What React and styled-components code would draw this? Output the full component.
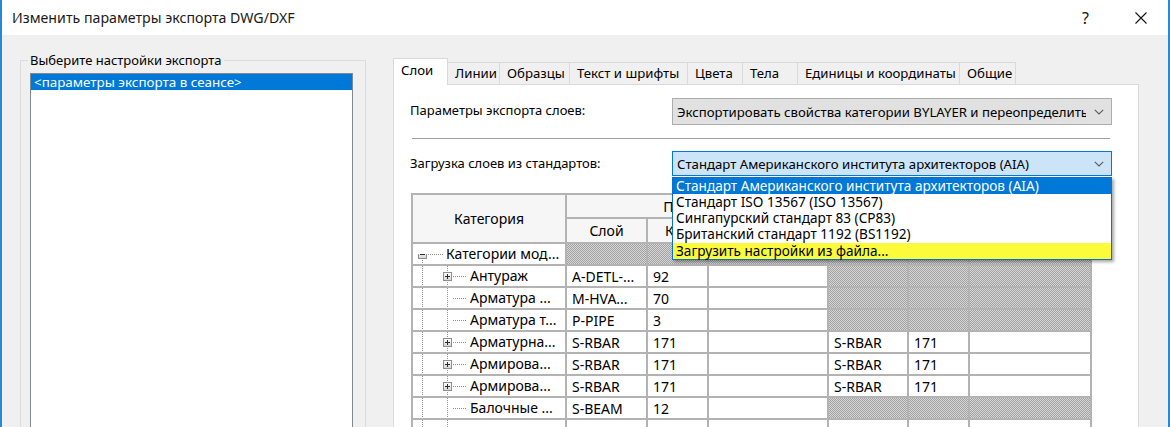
import React from 'react';
import styled, { createGlobalStyle, css } from 'styled-components';

const FONT = `"Noto Sans", "Open Sans", "DejaVu Sans", sans-serif`;

const Global = createGlobalStyle`
  html, body { margin: 0; padding: 0; background: #fff; }
  #root { width: 1170px; height: 427px; overflow: hidden; }
  * { box-sizing: border-box; }
`;

const Window = styled.div`
  width: 1170px;
  height: 427px;
  border-left: 2px solid #2a86d6;
  border-right: 2px solid #2a86d6;
  display: flex;
  flex-direction: column;
  font-family: ${FONT};
  color: #000;
  overflow: hidden;
`;

const TitleBar = styled.div`
  height: 35px;
  flex: none;
  background: #fff;
  display: flex;
  align-items: center;
  padding-left: 10px;
`;

const Title = styled.div`
  flex: 1;
  font-size: 14.2px;
  color: #1a1a1a;
`;

const TitleButton = styled.div`
  width: 55px;
  height: 35px;
  display: flex;
  align-items: center;
  justify-content: center;
  font-size: 16px;
  color: #111;
`;

const Body = styled.div`
  flex: 1;
  min-height: 0;
  background: #f0f0f0;
  display: flex;
  align-items: flex-start;
  padding: 16px 0 0 18px;
`;

const GroupBox = styled.fieldset`
  margin: 0;
  width: 346px;
  height: 420px;
  border: 1px solid #dcdcdc;
  padding: 4px 12px 0 9px;
  flex: none;
`;

const Legend = styled.legend`
  padding: 0 2px;
  margin-left: -2px;
  font-size: 13px;
  line-height: 18px;
  color: #000;
`;

const ListBox = styled.div`
  width: 323px;
  height: 400px;
  background: #fff;
  border: 1px solid #828790;
`;

const ListItem = styled.div`
  height: 16px;
  line-height: 16px;
  font-size: 13.4px;
  padding-left: 3px;
  white-space: nowrap;
  ${(p) => p.$selected && css`
    background: #0078d7;
    color: #fff;
  `}
`;

const TabArea = styled.div`
  margin: 7px 0 0 27px;
  width: 746px;
  height: 420px;
  display: flex;
  flex-direction: column;
  flex: none;
`;

const TabStrip = styled.div`
  display: flex;
  align-items: flex-end;
  height: 26px;
  flex: none;
  position: relative;
  z-index: 1;
`;

const Tab = styled.div`
  width: ${(p) => p.$w}px;
  height: 22px;
  margin-right: -1px;
  border: 1px solid #d9d9d9;
  border-bottom: none;
  background: #f0f0f0;
  padding-left: 7px;
  font-size: 13.2px;
  line-height: 21px;
  white-space: nowrap;
  ${(p) => p.$active && css`
    height: 27px;
    margin-bottom: -1px;
    background: #fff;
    line-height: 22px;
    position: relative;
    z-index: 2;
  `}
`;

const Panel = styled.div`
  flex: 1;
  background: #fff;
  border: 1px solid #d9d9d9;
  padding: 13px 0 0 16px;
  display: flex;
  flex-direction: column;
`;

const FieldRow = styled.div`
  display: grid;
  grid-template-columns: 262px 440px;
  align-items: center;
  margin-top: ${(p) => p.$mt || 0}px;
`;

const Label = styled.div`
  font-size: 13px;
  line-height: 18px;
  margin-top: ${(p) => p.$dy || 0}px;
`;

const ComboWrap = styled.div`
  position: relative;
`;

const Combo = styled.div`
  height: ${(p) => p.$h}px;
  display: flex;
  align-items: center;
  padding: 0 7px 0 4px;
  font-size: 13.2px;
  border: 1px solid ${(p) => (p.$focused ? '#0078d7' : '#adadad')};
  background: ${(p) => (p.$focused ? '#cce4f7' : '#e1e1e1')};
`;

const ComboText = styled.div`
  flex: 1;
  overflow: hidden;
  white-space: nowrap;
`;

const ChevronBox = styled.div`
  width: 18px;
  display: flex;
  justify-content: flex-end;
  flex: none;
`;

const Separator = styled.div`
  height: 1px;
  width: 698px;
  margin: 13px 0 0 2px;
  background: #a0a0a0;
`;

const Popup = styled.div`
  position: absolute;
  left: 0;
  top: calc(100% + 1px);
  width: 440px;
  background: #fff;
  border: 1px solid #0a6fce;
  box-shadow: 2px 2px 3px rgba(0, 0, 0, 0.35);
  z-index: 10;
`;

const PopupItem = styled.div`
  height: 16px;
  line-height: 16px;
  font-size: 13.6px;
  padding-left: 3px;
  white-space: nowrap;
  ${(p) => p.$selected && css`
    background: #0078d7;
    color: #fff;
  `}
  ${(p) => p.$hot && css`
    background: #fbfb3c;
    margin-top: 1px;
  `}
`;

const Table = styled.table`
  margin: 17px 0 0 1px;
  border-collapse: collapse;
  table-layout: fixed;
  width: 679px;
  font-size: 14px;
  border: 2px solid #a4a4a4;
`;

const Col = styled.col`
  width: ${(p) => p.$w}px;
`;

const Th = styled.th`
  font-weight: 400;
  background: #f6f6f6;
  border: 2px solid #b3b3b3;
  height: ${(p) => p.$h || 24}px;
  text-align: center;
  padding: 0;
  white-space: nowrap;
  overflow: hidden;
`;

const Td = styled.td`
  border: 2px solid #b3b3b3;
  height: 22px;
  padding: 0 0 0 5px;
  white-space: nowrap;
  overflow: hidden;
  ${(p) => p.$hatch && css`
    background-color: #bdbdbd;
    background-image: repeating-conic-gradient(#a2a2a2 0% 25%, #d6d6d6 0% 50%);
    background-size: 2px 2px;
  `}
`;

const TreeTd = styled.td`
  border: 2px solid #b3b3b3;
  height: 22px;
  padding: 0 0 0 4px;
  white-space: nowrap;
  overflow: hidden;
`;

const Tree = styled.div`
  display: flex;
  align-items: stretch;
  height: 20px;
`;

const dottedV = css`
  background-image: linear-gradient(to bottom, #8f8f8f 50%, transparent 50%);
  background-size: 1px 2px;
  background-repeat: repeat-y;
  background-position: center top;
`;

const Slot = styled.div`
  width: 11px;
  flex: none;
  display: flex;
  align-items: center;
  justify-content: center;
  margin-right: ${(p) => p.$mr || 0}px;
  ${(p) => p.$line && dottedV}
  ${(p) => p.$lower && css`
    ${dottedV}
    -webkit-mask-image: linear-gradient(to bottom, transparent 50%, #000 50%);
  `}
`;

const Connector = styled.div`
  width: ${(p) => p.$w}px;
  flex: none;
  align-self: center;
  height: 1px;
  background-image: linear-gradient(to right, #8f8f8f 50%, transparent 50%);
  background-size: 2px 1px;
  margin-right: 3px;
`;

const TreeLabel = styled.div`
  align-self: center;
  line-height: 20px;
`;

const BoxIcon = styled.svg`
  display: block;
`;

function ToggleBox({ plus }) {
  const id = plus ? 'gp' : 'gm';
  return (
    <BoxIcon width="9" height="9" viewBox="0 0 9 9">
      <defs>
        <linearGradient id={id} x1="0" y1="0" x2="0" y2="1">
          <stop offset="0" stopColor="#ffffff" />
          <stop offset="1" stopColor="#d4d4d4" />
        </linearGradient>
      </defs>
      <rect x="0.5" y="0.5" width="8" height="8" fill={`url(#${id})`} stroke="#8e8f8f" />
      <line x1="2" y1="4.5" x2="7" y2="4.5" stroke="#2b2b2b" />
      {plus && <line x1="4.5" y1="2" x2="4.5" y2="7" stroke="#2b2b2b" />}
    </BoxIcon>
  );
}

function Chevron() {
  return (
    <svg width="10" height="6" viewBox="0 0 10 6">
      <path d="M0.8 0.8 L5 5 L9.2 0.8" fill="none" stroke="#5a5a5a" strokeWidth="1.1" />
    </svg>
  );
}

function CloseIcon() {
  return (
    <svg width="12" height="12" viewBox="0 0 12 12">
      <path d="M0.5 0.5 L11.5 11.5 M11.5 0.5 L0.5 11.5" stroke="#111" strokeWidth="1.1" fill="none" />
    </svg>
  );
}

const tabs = [
  { label: 'Слои', w: 55, active: true },
  { label: 'Линии', w: 53 },
  { label: 'Образцы', w: 71 },
  { label: 'Текст и шрифты', w: 119 },
  { label: 'Цвета', w: 56 },
  { label: 'Тела', w: 56 },
  { label: 'Единицы и координаты', w: 163 },
  { label: 'Общие', w: 57 },
];

const options = [
  'Стандарт Американского института архитекторов (AIA)',
  'Стандарт ISO 13567 (ISO 13567)',
  'Сингапурский стандарт 83 (CP83)',
  'Британский стандарт 1192 (BS1192)',
];

const rows = [
  { name: 'Антураж', plus: true, p: ['A-DETL-...', '92'] },
  { name: 'Арматура ...', p: ['M-HVA...', '70'] },
  { name: 'Арматура т...', p: ['P-PIPE', '3'] },
  { name: 'Арматурна...', plus: true, p: ['S-RBAR', '171'], s: ['S-RBAR', '171'] },
  { name: 'Армирова...', plus: true, p: ['S-RBAR', '171'], s: ['S-RBAR', '171'] },
  { name: 'Армирова...', plus: true, p: ['S-RBAR', '171'], s: ['S-RBAR', '171'] },
  { name: 'Балочные ...', p: ['S-BEAM', '12'] },
  { name: '', p: ['', ''], s: ['', ''] },
];

function ChildRow({ row }) {
  return (
    <tr>
      <TreeTd>
        <Tree>
          <Slot $line $mr={14} />
          <Slot $line>{row.plus && <ToggleBox plus />}</Slot>
          <Connector $w={14} />
          <TreeLabel>{row.name}</TreeLabel>
        </Tree>
      </TreeTd>
      <Td>{row.p[0]}</Td>
      <Td>{row.p[1]}</Td>
      <Td />
      {row.s ? (
        <>
          <Td>{row.s[0]}</Td>
          <Td>{row.s[1]}</Td>
          <Td />
        </>
      ) : (
        <>
          <Td $hatch />
          <Td $hatch />
          <Td $hatch />
        </>
      )}
    </tr>
  );
}

export default function App() {
  return (
    <>
      <Global />
      <Window>
        <TitleBar>
          <Title>Изменить параметры экспорта DWG/DXF</Title>
          <TitleButton>?</TitleButton>
          <TitleButton><CloseIcon /></TitleButton>
        </TitleBar>
        <Body>
          <GroupBox>
            <Legend>Выберите настройки экспорта</Legend>
            <ListBox>
              <ListItem $selected>&lt;параметры экспорта в сеансе&gt;</ListItem>
            </ListBox>
          </GroupBox>
          <TabArea>
            <TabStrip>
              {tabs.map((t) => (
                <Tab key={t.label} $w={t.w} $active={t.active}>{t.label}</Tab>
              ))}
            </TabStrip>
            <Panel>
              <FieldRow>
                <Label $dy={-3}>Параметры экспорта слоев:</Label>
                <Combo $h={27}>
                  <ComboText>Экспортировать свойства категории BYLAYER и переопределить</ComboText>
                  <ChevronBox><Chevron /></ChevronBox>
                </Combo>
              </FieldRow>
              <Separator />
              <FieldRow $mt={12}>
                <Label $dy={-2}>Загрузка слоев из стандартов:</Label>
                <ComboWrap>
                  <Combo $h={25} $focused>
                    <ComboText>{options[0]}</ComboText>
                    <ChevronBox><Chevron /></ChevronBox>
                  </Combo>
                  <Popup>
                    {options.map((o, i) => (
                      <PopupItem key={o} $selected={i === 0}>{o}</PopupItem>
                    ))}
                    <PopupItem $hot>Загрузить настройки из файла...</PopupItem>
                  </Popup>
                </ComboWrap>
              </FieldRow>
              <Table>
                <colgroup>
                  <Col $w={154} />
                  <Col $w={81} />
                  <Col $w={61} />
                  <Col $w={120} />
                  <Col $w={80} />
                  <Col $w={61} />
                  <Col $w={122} />
                </colgroup>
                <thead>
                  <tr>
                    <Th rowSpan={2}>Категория</Th>
                    <Th colSpan={3} $h={24}>Проекция</Th>
                    <Th colSpan={3} $h={24} />
                  </tr>
                  <tr>
                    <Th $h={25}>Слой</Th>
                    <Th $h={25}>Код</Th>
                    <Th $h={25} />
                    <Th $h={25} />
                    <Th $h={25} />
                    <Th $h={25} />
                  </tr>
                </thead>
                <tbody>
                  <tr>
                    <TreeTd>
                      <Tree>
                        <Slot $lower><ToggleBox /></Slot>
                        <Connector $w={15} />
                        <TreeLabel>Категории мод...</TreeLabel>
                      </Tree>
                    </TreeTd>
                    <Td $hatch />
                    <Td $hatch />
                    <Td $hatch />
                    <Td $hatch />
                    <Td $hatch />
                    <Td $hatch />
                  </tr>
                  {rows.map((r, i) => (
                    <ChildRow key={i} row={r} />
                  ))}
                </tbody>
              </Table>
            </Panel>
          </TabArea>
        </Body>
      </Window>
    </>
  );
}
